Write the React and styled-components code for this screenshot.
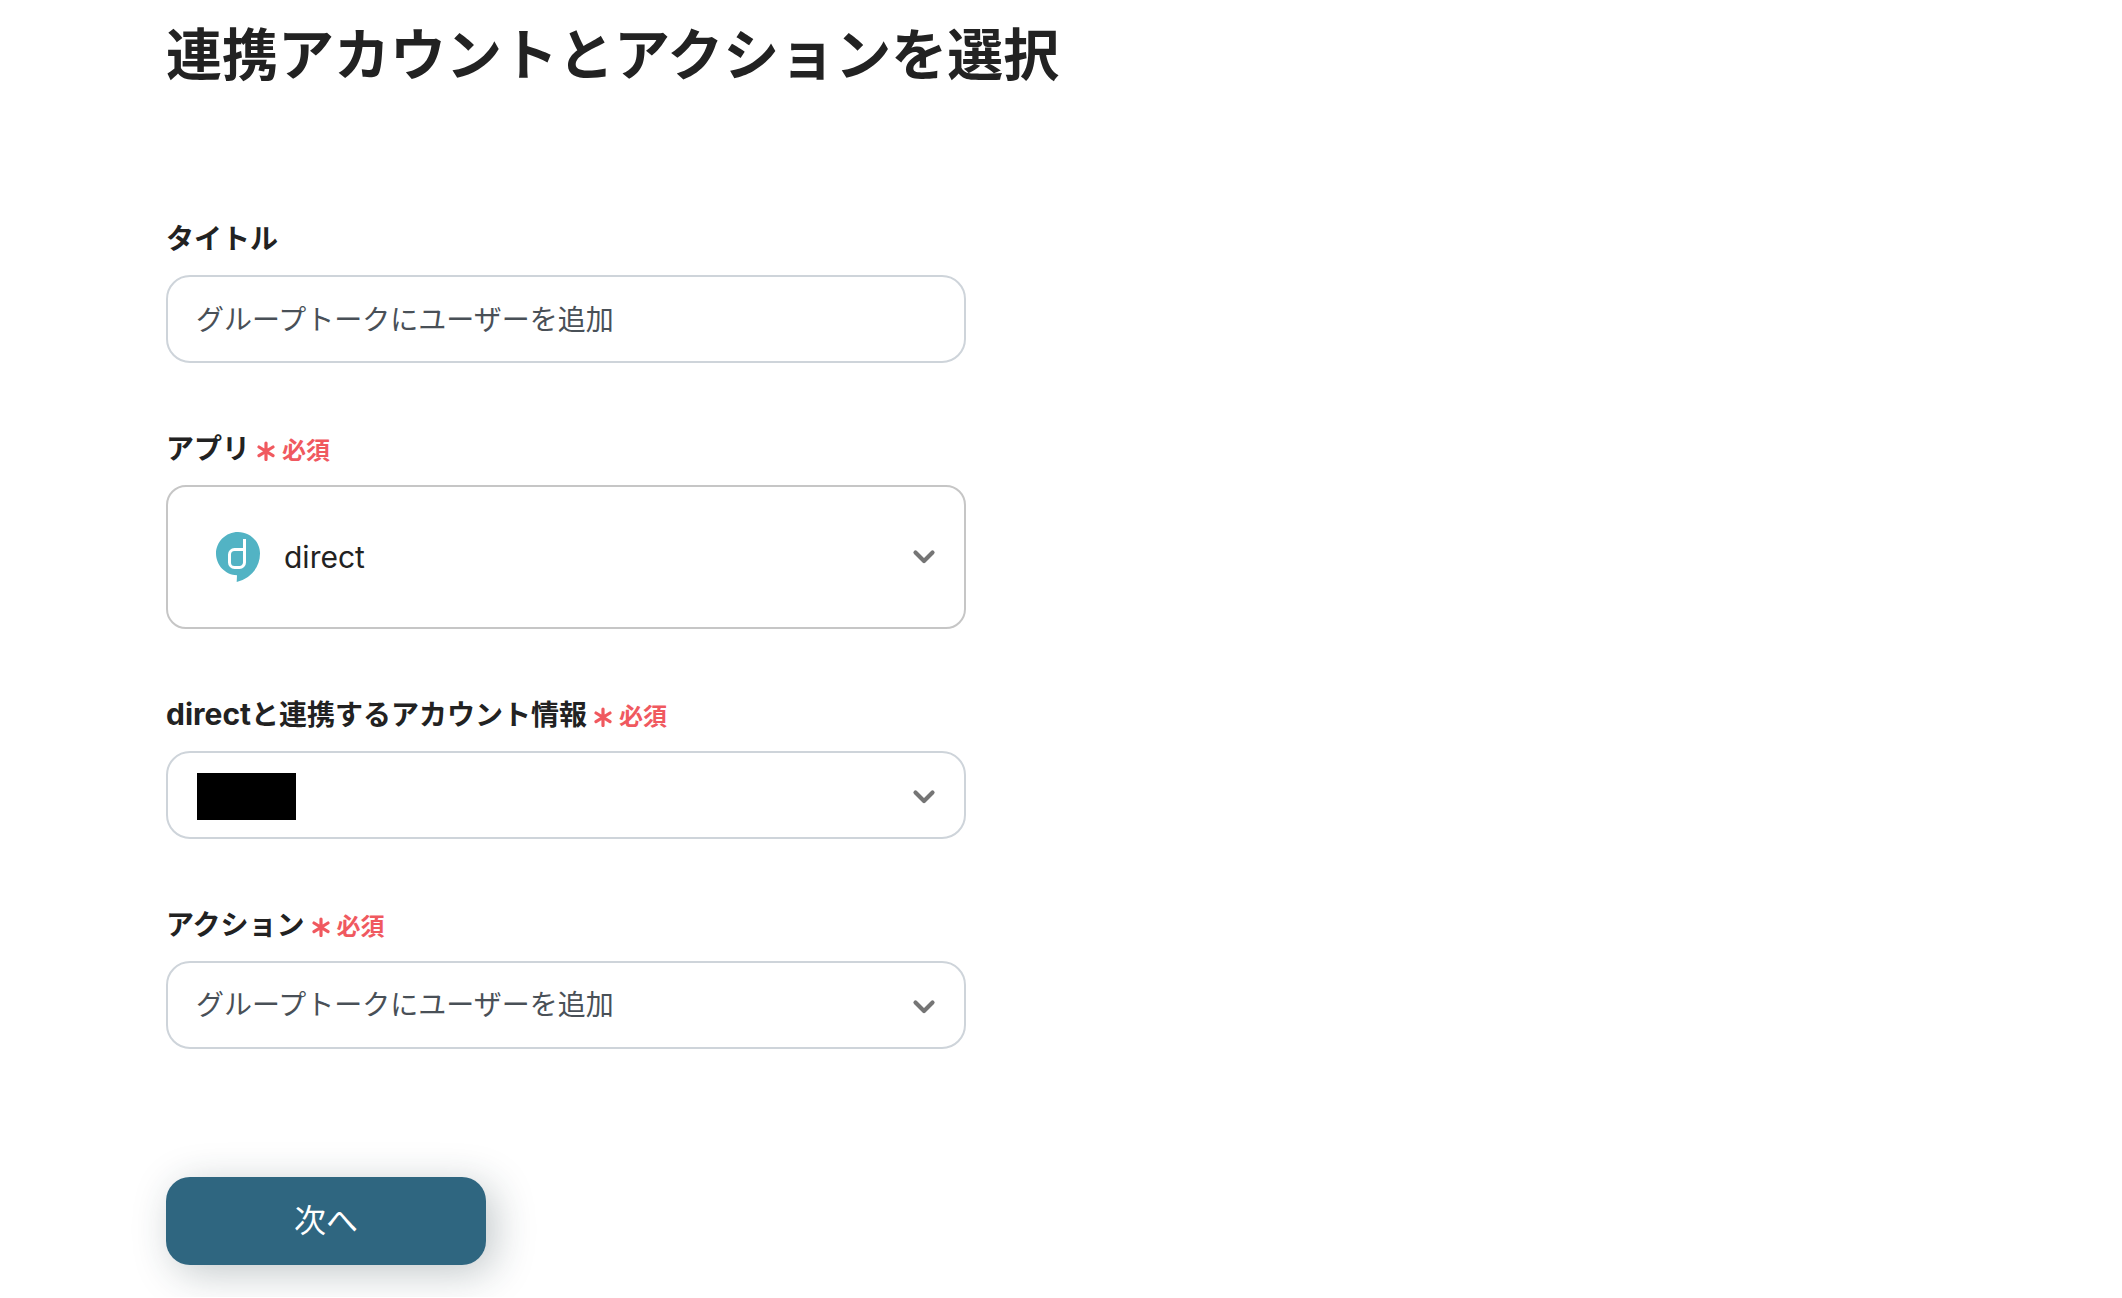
import React from "react";
import styled, { createGlobalStyle } from "styled-components";

const GlobalStyle = createGlobalStyle`
  *, *::before, *::after { box-sizing: border-box; }
  body {
    margin: 0;
    background: #fff;
    color: #222;
    font-family: Inter, "Noto Sans CJK JP", sans-serif;
  }
`;

const Page = styled.main`
  padding: 13px 166px 32px;
`;

const Heading = styled.h1`
  margin: 0 0 120px;
  font-size: 56px;
  line-height: 84px;
  font-weight: 700;
`;

const Form = styled.form`
  display: flex;
  flex-direction: column;
  gap: 64px;
  max-width: 800px;
`;

const Field = styled.div`
  display: flex;
  flex-direction: column;
  gap: 14px;
`;

const Label = styled.label`
  display: flex;
  align-items: center;
  gap: 7px;
  font-size: 28px;
  line-height: 44px;
  font-weight: 700;
`;

const AppName = styled.span`
  font-size: 30px;
  line-height: 1;
`;

const Required = styled.span`
  display: flex;
  align-items: center;
  gap: 7px;
  padding-top: 4px;
  color: #f0595f;
  font-size: 24px;
  line-height: 36px;
`;

const TextInput = styled.input`
  width: 100%;
  height: 88px;
  padding: 0 28px 2px;
  border: 2px solid #ced4da;
  border-radius: 24px;
  background: #fff;
  color: #495057;
  font-family: inherit;
  font-size: 28px;
  line-height: 42px;
`;

const SelectFrame = styled.div`
  display: grid;
  align-items: center;

  > * {
    grid-area: 1 / 1;
  }
`;

const Select = styled.select`
  appearance: none;
  width: 100%;
  height: ${(p) => (p.$large ? "144px" : "88px")};
  padding: 0 72px 0 ${(p) => (p.$large ? "116px" : "28px")};
  border: 2px solid ${(p) => (p.$large ? "#c6c6c6" : "#ced4da")};
  border-radius: ${(p) => (p.$large ? "20px" : "24px")};
  background: #fff;
  color: ${(p) => (p.$large ? "#222" : "#495057")};
  font-family: inherit;
  font-size: ${(p) => (p.$large ? "30px" : "28px")};
  line-height: 42px;
`;

const Chevron = styled.svg`
  justify-self: end;
  width: 24px;
  height: 16px;
  margin-top: ${(p) => (p.$large ? "0" : "4px")};
  margin-right: 30px;
  pointer-events: none;
`;

const AppLogo = styled.svg`
  width: 44px;
  height: 52px;
  margin-left: 50px;
  pointer-events: none;
`;

const Redaction = styled.span`
  width: 99px;
  height: 47px;
  margin-top: 3px;
  margin-left: 31px;
  background: #000;
  pointer-events: none;
`;

const SubmitButton = styled.button`
  align-self: flex-start;
  width: 320px;
  height: 88px;
  margin-top: 64px;
  padding: 0;
  border: 0;
  border-radius: 24px;
  background: #2f6680;
  box-shadow: 8px 8px 40px rgba(30, 50, 60, 0.27);
  color: #fff;
  font-family: inherit;
  font-size: 32px;
  line-height: 48px;
  cursor: pointer;
`;

function RequiredMark() {
  return (
    <Required>
      <svg width="18" height="20" viewBox="0 0 18 20" aria-hidden="true">
        <path d="M9 2v16.500M2 6l14 8.600M16 6L2 14.600" stroke="currentColor" strokeWidth="3.200" strokeLinecap="round" fill="none" />
      </svg>
      必須
    </Required>
  );
}

function DropDown({ id, large, overlay, children }) {
  return (
    <SelectFrame>
      <Select id={id} $large={large}>
        {children}
      </Select>
      {overlay}
      <Chevron $large={large} viewBox="0 0 24 16" aria-hidden="true">
        <path d="M3.500 3.500L12 12l8.500-8.500" fill="none" stroke="#757575" strokeWidth="4.200" strokeLinecap="round" strokeLinejoin="round" />
      </Chevron>
    </SelectFrame>
  );
}

function DirectLogo() {
  return (
    <AppLogo viewBox="0 0 44 52" aria-hidden="true">
      <path d="M22 1C10 1 0 10.700 0 22.500S9.500 44 21 44.200L20.700 51C34 47.500 44 37 44 22.500 44 10.700 34 1 22 1Z" fill="#52b3c4" />
      <path d="M28.500 8v23.500a5 5 0 0 1-5 5h-5a5 5 0 0 1-5-5v-8a5 5 0 0 1 5-5h10" fill="none" stroke="#fff" strokeWidth="3" />
    </AppLogo>
  );
}

export default function App() {
  return (
    <>
      <GlobalStyle />
      <Page>
        <Heading>連携アカウントとアクションを選択</Heading>
        <Form onSubmit={(e) => e.preventDefault()}>
          <Field>
            <Label htmlFor="title">タイトル</Label>
            <TextInput id="title" type="text" defaultValue="グループトークにユーザーを追加" />
          </Field>
          <Field>
            <Label htmlFor="app">
              アプリ
              <RequiredMark />
            </Label>
            <DropDown id="app" large overlay={<DirectLogo />}>
              <option>direct</option>
            </DropDown>
          </Field>
          <Field>
            <Label htmlFor="account">
              <span>
                <AppName>direct</AppName>と連携するアカウント情報
              </span>
              <RequiredMark />
            </Label>
            <DropDown id="account" overlay={<Redaction />}>
              <option></option>
            </DropDown>
          </Field>
          <Field>
            <Label htmlFor="action">
              アクション
              <RequiredMark />
            </Label>
            <DropDown id="action">
              <option>グループトークにユーザーを追加</option>
            </DropDown>
          </Field>
          <SubmitButton type="submit">次へ</SubmitButton>
        </Form>
      </Page>
    </>
  );
}
